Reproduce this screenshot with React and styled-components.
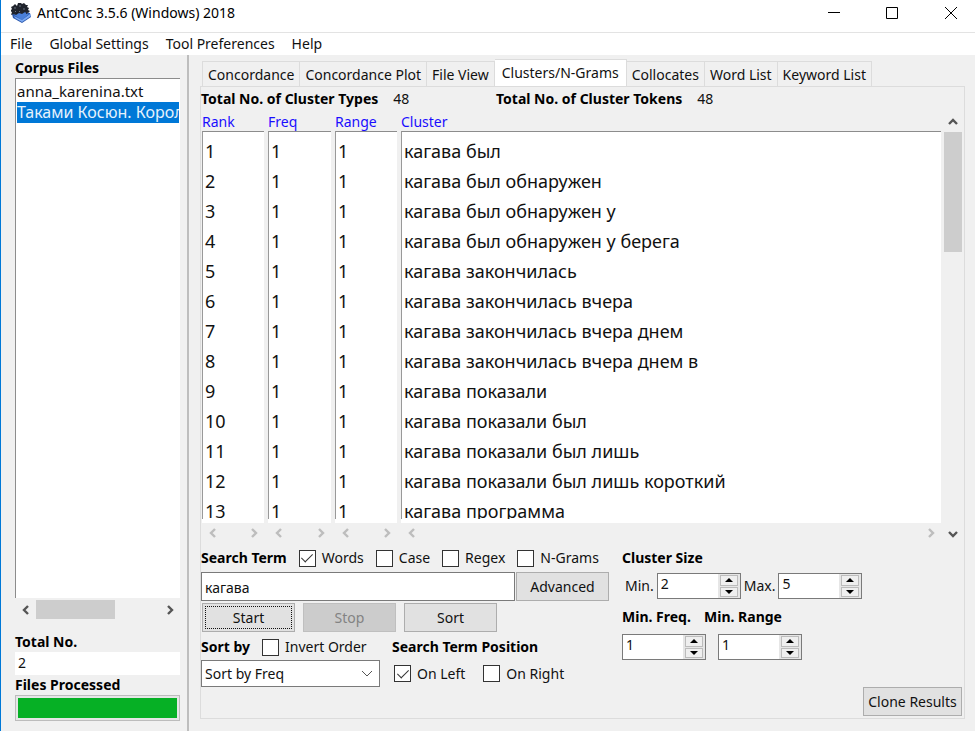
import React, { useState } from "react";
import styled, { createGlobalStyle, css } from "styled-components";

const GlobalStyle = createGlobalStyle`
  *, *::before, *::after { box-sizing: border-box; }
  html, body, #root { height: 100%; }
  body {
    margin: 0;
    background: #f0f0f0;
    color: #111;
    font: 14px/20px "Noto Sans", "Open Sans", sans-serif;
    overflow: hidden;
  }
  button, input, select { font: inherit; color: inherit; margin: 0; }
`;

const Window = styled.div`
  display: flex;
  flex-direction: column;
  height: 100%;
  border-left: 1px solid #0078d7;
  white-space: nowrap;
`;

const TitleBar = styled.header`
  display: flex;
  align-items: center;
  gap: 5px;
  height: 33px;
  padding: 0 0 6px 10px;
  background: #fff;
  border-bottom: 1px solid #e3e3e3;
`;

const Title = styled.h1`
  flex: 1;
  margin: 0;
  font-size: 14px;
  font-weight: 400;
  color: #000;
`;

const WindowButton = styled.button`
  display: grid;
  place-items: center;
  width: ${(p) => (p.$last ? 48 : 58)}px;
  height: 26px;
  margin-left: ${(p) => (p.$last ? 6 : 0)}px;
  padding: 0;
  border: 0;
  background: none;
`;

const MenuBar = styled.nav`
  display: flex;
  gap: 17px;
  height: 22px;
  padding: 0 9px;
  background: #fff;
`;

const MenuItem = styled.button`
  padding: 0;
  border: 0;
  background: none;
  line-height: 22px;
`;

const Body = styled.div`
  flex: 1;
  display: flex;
  min-height: 0;
`;

const Sidebar = styled.aside`
  display: flex;
  flex-direction: column;
  width: 188px;
  flex: none;
  padding: 3px 7px 10px 14px;
  border-right: 2px solid #bdbdbd;
`;

const Heading = styled.span`
  font-weight: 700;
  font-size: 14px;
  line-height: 20px;
  color: #000;
`;

const FileList = styled.ul`
  flex: 1;
  min-height: 0;
  margin: 0;
  padding: 2px 1px;
  list-style: none;
  background: #fff;
  border-top: 1px solid #8c8c8c;
  border-left: 1px solid #8c8c8c;
`;

const FileItem = styled.li`
  height: 21px;
  overflow: hidden;
  font-size: 15px;
  line-height: 21px;
  ${(p) => p.$selected && css`
    background: #0078d7;
    color: #e6f2fc;
    font-size: 16px;
  `}
`;

const SideScroll = styled.div`
  display: flex;
  align-items: center;
  height: 21px;
  margin: 1px 0 12px;
`;

const ScrollTrack = styled.div`
  flex: 1;
  height: 19px;
`;

const ScrollThumb = styled.div`
  background: #cdcdcd;
  width: ${(p) => p.$width};
  height: ${(p) => p.$height};
`;

const ArrowButton = styled.button`
  display: grid;
  place-items: center;
  width: ${(p) => (p.$narrow ? 18 : 21)}px;
  height: 20px;
  padding: 0;
  border: 0;
  background: none;
  color: ${(p) => (p.$dim ? "#bdbdbd" : "#555")};
`;

const Readout = styled.output`
  display: block;
  height: 23px;
  padding: 1px 3px;
  background: #fff;
`;

const Progress = styled.div`
  height: 26px;
  padding: 2px;
  border: 1px solid #bcbcbc;
  background: #e6e6e6;
`;

const ProgressFill = styled.div`
  height: 100%;
  background: #06b025;
`;

const Main = styled.main`
  flex: 1;
  min-width: 0;
  display: flex;
  flex-direction: column;
  padding: 4px 10px 12px 11px;
`;

const TabList = styled.div`
  display: flex;
  align-items: flex-end;
  height: 27px;
  padding-left: 2px;
`;

const Tab = styled.button`
  height: 25px;
  padding: 2px 5px 0;
  border: 1px solid #dcdcdc;
  border-width: 1px 1px 0 0;
  background: #f0f0f0;
  line-height: 20px;
  &:first-child { border-left-width: 1px; }
  ${(p) => p.$active && css`
    height: 27px;
    padding: 0 7px 1px;
    background: #fff;
  `}
`;

const Pane = styled.section`
  flex: 1;
  min-height: 0;
  display: flex;
  flex-direction: column;
  padding: 2px 2px 2px 0;
  border: 1px solid #dcdcdc;
`;

const Totals = styled.div`
  display: grid;
  grid-template-columns: 295px 1fr;
  height: 23px;
`;

const Total = styled.div`
  display: flex;
  gap: 15px;
`;

const Results = styled.div`
  flex: 1;
  min-height: 0;
  display: flex;
  gap: 3px;
`;

const ResultsMain = styled.div`
  flex: 1;
  min-width: 0;
  display: flex;
  flex-direction: column;
`;

const TableClip = styled.div`
  flex: 1;
  min-height: 0;
  margin-left: 1px;
  overflow: hidden;
`;

const Table = styled.table`
  width: 100%;
  table-layout: fixed;
  border-collapse: separate;
  border-spacing: 0;
`;

const Col = styled.col`
  width: ${(p) => p.$width};
`;

const Th = styled.th`
  height: 19px;
  padding: 0;
  text-align: left;
  font-weight: 400;
  line-height: 19px;
  color: #1a0dff;
`;

const Td = styled.td`
  height: 30px;
  padding: 0;
  border-right: 4px solid #f0f0f0;
  background: #fff;
  overflow: hidden;
  &:last-child { border-right: 0; }
`;

const Cell = styled.div`
  height: ${(p) => (p.$first ? 35 : 30)}px;
  padding: ${(p) => (p.$first ? "4px 0 0 2px" : "0 0 0 2px")};
  border-left: 1px solid #999;
  border-top: ${(p) => (p.$first ? "1px solid #8c8c8c" : "0")};
  font-size: 18px;
  line-height: 30px;
`;

const ColumnScrolls = styled.div`
  display: grid;
  grid-template-columns: 66px 67px 66px 1fr;
  height: 25px;
  margin-left: 1px;
`;

const ColumnScroll = styled.div`
  display: flex;
  justify-content: space-between;
  margin-right: ${(p) => (p.$last ? 0 : 4)}px;
  border-top: 4px solid #fff;
`;

const VerticalScroll = styled.div`
  display: flex;
  flex-direction: column;
  width: 18px;
`;

const VerticalTrack = styled.div`
  flex: 1;
`;

const Controls = styled.form`
  display: flex;
  gap: 13px;
`;

const SearchControls = styled.div`
  width: 408px;
`;

const ClusterControls = styled.div`
  flex: 1;
  display: flex;
  flex-direction: column;
`;

const Row = styled.div`
  display: flex;
  align-items: center;
  height: ${(p) => p.$height}px;
  gap: ${(p) => p.$gap || 0}px;
  padding-left: ${(p) => p.$indent || 0}px;
`;

const Check = styled.label`
  display: flex;
  align-items: center;
  gap: 6px;
`;

const CheckBox = styled.input`
  appearance: none;
  display: grid;
  place-items: center;
  width: 17px;
  height: 17px;
  border: 1px solid #333;
  background: #fff;
  &:checked::before {
    content: "";
    width: 6px;
    height: 11px;
    margin-bottom: 3px;
    border: solid #333;
    border-width: 0 1px 1px 0;
    transform: rotate(45deg);
  }
`;

const SearchInput = styled.input`
  flex: 1;
  min-width: 0;
  height: 29px;
  padding: 2px 3px 0;
  border: 1px solid #7a7a7a;
  border-radius: 0;
  background: #fff;
  outline: 0;
`;

const Button = styled.button`
  width: ${(p) => p.$width || 93}px;
  height: 29px;
  padding: 0;
  border: 1px solid #adadad;
  background: #e1e1e1;
  line-height: 20px;
  ${(p) => p.$default && css`
    outline: 1px dotted #111;
    outline-offset: -4px;
  `}
  &:disabled {
    background: #cccccc;
    border-color: #bfbfbf;
    color: #838383;
  }
`;

const SelectBox = styled.span`
  display: grid;
  grid-template-columns: 1fr 18px;
  align-items: center;
  width: 179px;
  height: 27px;
  border: 1px solid #7a7a7a;
  background: #fff;
  color: #555;
`;

const Select = styled.select`
  grid-area: 1 / 1 / 2 / 3;
  appearance: none;
  height: 25px;
  padding: 0 3px;
  border: 0;
  border-radius: 0;
  background: none;
  color: #111;
  outline: 0;
`;

const SelectArrow = styled.svg`
  grid-area: 1 / 2;
  pointer-events: none;
`;

const Columns = styled.div`
  display: grid;
  grid-template-columns: ${(p) => p.$columns};
  align-items: center;
  height: ${(p) => p.$height}px;
`;

const SpinFrame = styled.span`
  display: flex;
  width: 84px;
  height: 26px;
  border: 1px solid #7a7a7a;
  background: #fff;
`;

const SpinInput = styled.input`
  appearance: textfield;
  flex: 1;
  min-width: 0;
  height: 20px;
  padding: 0 3px;
  border: 0;
  background: none;
  outline: 0;
  &::-webkit-inner-spin-button { appearance: none; margin: 0; }
`;

const SpinButtons = styled.span`
  display: grid;
  grid-template-rows: 1fr 1fr;
  gap: 1px;
  width: 22px;
  padding: 1px 2px;
  background: #e6e6e6;
`;

const SpinButton = styled.button`
  display: grid;
  place-items: center;
  padding: 0;
  border: 1px solid #bcbcbc;
  background: #efefef;
`;

const Footer = styled.div`
  display: flex;
  justify-content: flex-end;
  height: 29px;
`;

const paths = {
  left: "M8 2 4 6l4 4",
  right: "M4 2l4 4-4 4",
  up: "M2 8l4-4 4 4",
  down: "M2 4l4 4 4-4",
};

function Arrow({ direction, dim, narrow }) {
  return (
    <ArrowButton type="button" $dim={dim} $narrow={narrow} disabled={dim} aria-label={`Scroll ${direction}`}>
      <svg width="12" height="12" viewBox="0 0 12 12" fill="none" stroke="currentColor" strokeWidth="2.4">
        <path d={paths[direction]} />
      </svg>
    </ArrowButton>
  );
}

function AppIcon() {
  return (
    <svg width="21" height="22" viewBox="0 0 21 22" aria-hidden="true">
      <path d="m1 12 8-3 10 2 1 4-9 6-9-5z" fill="#2b58ad" />
      <path d="m3 13 7-4 8 3-7 6z" fill="#4a7fd8" />
      <path d="m3 14 8 4 8-6 1 2-9 6-7-4z" fill="#79a8f2" />
      <path d="m2 4 2-2 2 2 1-3h3l1 1 2-1 2 2h2l-1 2 2 1-1 2 2 1-2 2-3-1-3 2-3-1-3 2-2-1-3 1 1-3-2-1 2-2-1-2z" fill="#20242d" />
      <path d="m3 6 2 0m3-2 2 0m2 3 2 0m-6 2 1 1m-5-1 1 1" stroke="#697482" />
      <path d="m5 12 2-2m9 2-1-2" stroke="#151a25" />
    </svg>
  );
}

function CheckField({ label, defaultChecked }) {
  return (
    <Check>
      <CheckBox type="checkbox" defaultChecked={defaultChecked} />
      {label}
    </Check>
  );
}

function Spin({ id, initial, label }) {
  const [value, setValue] = useState(initial);
  return (
    <SpinFrame>
      <SpinInput id={id} aria-label={label} type="number" min="1" value={value} onChange={(e) => setValue(Number(e.target.value))} />
      <SpinButtons>
        <SpinButton type="button" aria-label={`Increase ${label}`} onClick={() => setValue(value + 1)}>
          <svg width="8" height="4" viewBox="0 0 8 4"><path d="M0 4 4 0l4 4z" /></svg>
        </SpinButton>
        <SpinButton type="button" aria-label={`Decrease ${label}`} onClick={() => setValue(Math.max(1, value - 1))}>
          <svg width="8" height="4" viewBox="0 0 8 4"><path d="M0 0h8L4 4z" /></svg>
        </SpinButton>
      </SpinButtons>
    </SpinFrame>
  );
}

const tabs = ["Concordance", "Concordance Plot", "File View", "Clusters/N-Grams", "Collocates", "Word List", "Keyword List"];

const clusters = [
  "кагава был",
  "кагава был обнаружен",
  "кагава был обнаружен у",
  "кагава был обнаружен у берега",
  "кагава закончилась",
  "кагава закончилась вчера",
  "кагава закончилась вчера днем",
  "кагава закончилась вчера днем в",
  "кагава показали",
  "кагава показали был",
  "кагава показали был лишь",
  "кагава показали был лишь короткий",
  "кагава программа",
];

export default function App() {
  return (
    <>
      <GlobalStyle />
      <Window>
        <TitleBar>
          <AppIcon />
          <Title>AntConc 3.5.6 (Windows) 2018</Title>
          <Row $height={26}>
            <WindowButton aria-label="Minimize">
              <svg width="12" height="12" stroke="#000"><path d="M0 5.5h12" /></svg>
            </WindowButton>
            <WindowButton aria-label="Maximize">
              <svg width="12" height="12" stroke="#000" fill="none"><path d="M.5.5h11v11H.5z" /></svg>
            </WindowButton>
            <WindowButton $last aria-label="Close">
              <svg width="12" height="12" stroke="#000"><path d="m0 0 12 12M12 0 0 12" /></svg>
            </WindowButton>
          </Row>
        </TitleBar>
        <MenuBar>
          {["File", "Global Settings", "Tool Preferences", "Help"].map((m) => <MenuItem key={m}>{m}</MenuItem>)}
        </MenuBar>
        <Body>
          <Sidebar>
            <Heading>Corpus Files</Heading>
            <FileList role="listbox" aria-label="Corpus Files">
              <FileItem role="option" aria-selected="false">anna_karenina.txt</FileItem>
              <FileItem role="option" aria-selected="true" $selected>Таками Косюн. Корол</FileItem>
            </FileList>
            <SideScroll>
              <Arrow direction="left" />
              <ScrollTrack><ScrollThumb $width="64%" $height="19px" /></ScrollTrack>
              <Arrow direction="right" />
            </SideScroll>
            <Heading>Total No.</Heading>
            <Readout>2</Readout>
            <Heading>Files Processed</Heading>
            <Progress role="progressbar" aria-label="Files Processed" aria-valuenow={100}><ProgressFill /></Progress>
          </Sidebar>
          <Main>
            <TabList role="tablist">
              {tabs.map((t, i) => <Tab key={t} role="tab" aria-selected={i === 3} $active={i === 3}>{t}</Tab>)}
            </TabList>
            <Pane>
              <Totals>
                <Total><Heading>Total No. of Cluster Types</Heading><span>48</span></Total>
                <Total><Heading>Total No. of Cluster Tokens</Heading><span>48</span></Total>
              </Totals>
              <Results>
                <ResultsMain>
                  <TableClip>
                    <Table>
                      <colgroup>
                        <Col $width="66px" /><Col $width="67px" /><Col $width="66px" /><Col $width="auto" />
                      </colgroup>
                      <thead>
                        <tr>{["Rank", "Freq", "Range", "Cluster"].map((h) => <Th key={h}>{h}</Th>)}</tr>
                      </thead>
                      <tbody>
                        {clusters.map((c, i) => (
                          <tr key={c}>
                            {[i + 1, 1, 1, c].map((v, j) => <Td key={j}><Cell $first={i === 0}>{v}</Cell></Td>)}
                          </tr>
                        ))}
                      </tbody>
                    </Table>
                  </TableClip>
                  <ColumnScrolls>
                    {[0, 1, 2, 3].map((n) => (
                      <ColumnScroll key={n} $last={n === 3}>
                        <Arrow direction="left" dim /><Arrow direction="right" dim />
                      </ColumnScroll>
                    ))}
                  </ColumnScrolls>
                </ResultsMain>
                <VerticalScroll>
                  <Arrow direction="up" narrow />
                  <VerticalTrack><ScrollThumb $width="18px" $height="120px" /></VerticalTrack>
                  <Arrow direction="down" narrow />
                </VerticalScroll>
              </Results>
              <Controls onSubmit={(e) => e.preventDefault()}>
                <SearchControls>
                  <Row $height={28} $gap={12}>
                    <Heading as="label" htmlFor="term">Search Term</Heading>
                    <CheckField label="Words" defaultChecked />
                    <CheckField label="Case" />
                    <CheckField label="Regex" />
                    <CheckField label="N-Grams" />
                  </Row>
                  <Row $height={29} $gap={1}>
                    <SearchInput id="term" defaultValue="кагава" />
                    <Button type="button">Advanced</Button>
                  </Row>
                  <Row $height={33} $gap={8} $indent={1}>
                    <Button $default>Start</Button>
                    <Button type="button" disabled>Stop</Button>
                    <Button type="button">Sort</Button>
                  </Row>
                  <Columns $height={26} $columns="191px 1fr">
                    <Row $height={26} $gap={12}>
                      <Heading as="label" htmlFor="sort">Sort by</Heading>
                      <CheckField label="Invert Order" />
                    </Row>
                    <Heading>Search Term Position</Heading>
                  </Columns>
                  <Columns $height={27} $columns="193px 1fr">
                    <SelectBox>
                      <Select id="sort"><option>Sort by Freq</option></Select>
                      <SelectArrow width="12" height="8" viewBox="0 0 12 8" fill="none" stroke="currentColor"><path d="m1 1 5 5 5-5" /></SelectArrow>
                    </SelectBox>
                    <Row $height={27} $gap={18}>
                      <CheckField label="On Left" defaultChecked />
                      <CheckField label="On Right" />
                    </Row>
                  </Columns>
                </SearchControls>
                <ClusterControls>
                  <Row $height={28}><Heading>Cluster Size</Heading></Row>
                  <Row $height={28} $gap={3} $indent={3}>
                    <label htmlFor="min">Min.</label><Spin id="min" initial={2} label="Minimum cluster size" />
                    <label htmlFor="max">Max.</label><Spin id="max" initial={5} label="Maximum cluster size" />
                  </Row>
                  <Columns $height={34} $columns="82px 1fr">
                    <Heading as="label" htmlFor="freq">Min. Freq.</Heading>
                    <Heading as="label" htmlFor="range">Min. Range</Heading>
                  </Columns>
                  <Row $height={26} $gap={12}>
                    <Spin id="freq" initial={1} label="Minimum frequency" />
                    <Spin id="range" initial={1} label="Minimum range" />
                  </Row>
                </ClusterControls>
              </Controls>
              <Footer><Button type="button" $width={99}>Clone Results</Button></Footer>
            </Pane>
          </Main>
        </Body>
      </Window>
    </>
  );
}
